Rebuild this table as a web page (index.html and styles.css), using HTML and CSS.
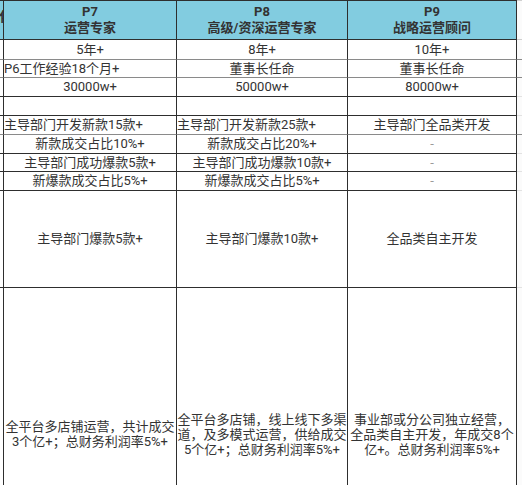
FILE: index.html
```html
<!DOCTYPE html>
<html lang="zh-CN">
<head>
<meta charset="utf-8">
<title>职级表</title>
<link rel="stylesheet" href="styles.css">
</head>
<body>
<div class="sheet">
  <div class="row head">
    <div class="cell sliver"><span class="clip">化</span></div>
    <div class="cell"><div>P7<br>运营专家</div></div>
    <div class="cell"><div>P8<br>高级/资深运营专家</div></div>
    <div class="cell"><div>P9<br>战略运营顾问</div></div>
    <div class="cell edge"></div>
  </div>
  <div class="row h20 grey">
    <div class="cell sliver"></div>
    <div class="cell">5年+</div>
    <div class="cell">8年+</div>
    <div class="cell">10年+</div>
    <div class="cell edge"></div>
  </div>
  <div class="row h18 grey">
    <div class="cell sliver"></div>
    <div class="cell left">P6工作经验18个月+</div>
    <div class="cell">董事长任命</div>
    <div class="cell">董事长任命</div>
    <div class="cell edge"></div>
  </div>
  <div class="row h19">
    <div class="cell sliver"></div>
    <div class="cell">30000w+</div>
    <div class="cell">50000w+</div>
    <div class="cell">80000w+</div>
    <div class="cell edge"></div>
  </div>
  <div class="row h19">
    <div class="cell sliver"></div>
    <div class="cell"></div>
    <div class="cell"></div>
    <div class="cell"></div>
    <div class="cell edge"></div>
  </div>
  <div class="row h19 grey">
    <div class="cell sliver"></div>
    <div class="cell left">主导部门开发新款15款+</div>
    <div class="cell left">主导部门开发新款25款+</div>
    <div class="cell">主导部门全品类开发</div>
    <div class="cell edge"></div>
  </div>
  <div class="row h19">
    <div class="cell sliver"></div>
    <div class="cell">新款成交占比10%+</div>
    <div class="cell">新款成交占比20%+</div>
    <div class="cell dash">-</div>
    <div class="cell edge"></div>
  </div>
  <div class="row h18">
    <div class="cell sliver"></div>
    <div class="cell">主导部门成功爆款5款+</div>
    <div class="cell">主导部门成功爆款10款+</div>
    <div class="cell dash">-</div>
    <div class="cell edge"></div>
  </div>
  <div class="row h19">
    <div class="cell sliver"></div>
    <div class="cell">新爆款成交占比5%+</div>
    <div class="cell">新爆款成交占比5%+</div>
    <div class="cell dash">-</div>
    <div class="cell edge"></div>
  </div>
  <div class="row h97">
    <div class="cell sliver"></div>
    <div class="cell">主导部门爆款5款+</div>
    <div class="cell">主导部门爆款10款+</div>
    <div class="cell">全品类自主开发</div>
    <div class="cell edge"></div>
  </div>
  <div class="row tall">
    <div class="cell sliver"></div>
    <div class="cell wrap">全平台多店铺运营，共计成交3个亿+；总财务利润率5%+</div>
    <div class="cell wrap">全平台多店铺，线上线下多渠道，及多模式运营，供给成交5个亿+；总财务利润率5%+</div>
    <div class="cell wrap">事业部或分公司独立经营，全品类自主开发，年成交8个亿+。总财务利润率5%+</div>
    <div class="cell edge"></div>
  </div>
</div>
</body>
</html>
```

FILE: styles.css
```css
html, body {
  margin: 0;
  padding: 0;
  background: #ffffff;
  overflow: hidden;
}

body {
  width: 522px;
  height: 485px;
  font-family: Roboto, "Noto Sans CJK SC", sans-serif;
  font-size: 13px;
  color: #333333;
}

.sheet {
  display: flex;
  flex-direction: column;
}

.row {
  display: grid;
  grid-template-columns: 4px 173px 171px 169px 1fr;
}

.cell {
  box-sizing: border-box;
  border-right: 1px solid #2e2e2e;
  border-bottom: 1px solid #2e2e2e;
  display: flex;
  align-items: center;
  justify-content: center;
  text-align: center;
  white-space: nowrap;
  overflow: visible;
  line-height: 16px;
  min-width: 0;
}

.row.grey .cell {
  border-bottom-color: #8a8a8a;
}

.cell.left {
  justify-content: flex-start;
  text-align: left;
}

.cell.edge {
  border-right: none;
  border-bottom-color: #e2e2e2;
  background: #fbfbfb;
}

.cell.sliver {
  overflow: hidden;
  justify-content: flex-end;
}

.cell.dash {
  color: #9a9a9a;
}

.head .cell {
  border-top: 1px solid #2e2e2e;
  background: #82cce0;
  font-weight: bold;
  line-height: 16px;
  font-size: 13px;
}

.head .cell.edge {
  background: #fbfbfb;
  border-top-color: #d0d0d0;
  border-bottom-color: #d0d0d0;
}

.clip {
  display: block;
  margin-right: -9px;
  margin-top: -6px;
}

.h20 { height: 20px; }
.h18 { height: 18px; }
.h19 { height: 19px; }
.h97 { height: 97px; }
.head { height: 40px; }
.tall { height: 292px; }

.cell.wrap {
  white-space: normal;
  line-height: 15px;
  padding-top: 1px;
  word-break: normal;
}
```
